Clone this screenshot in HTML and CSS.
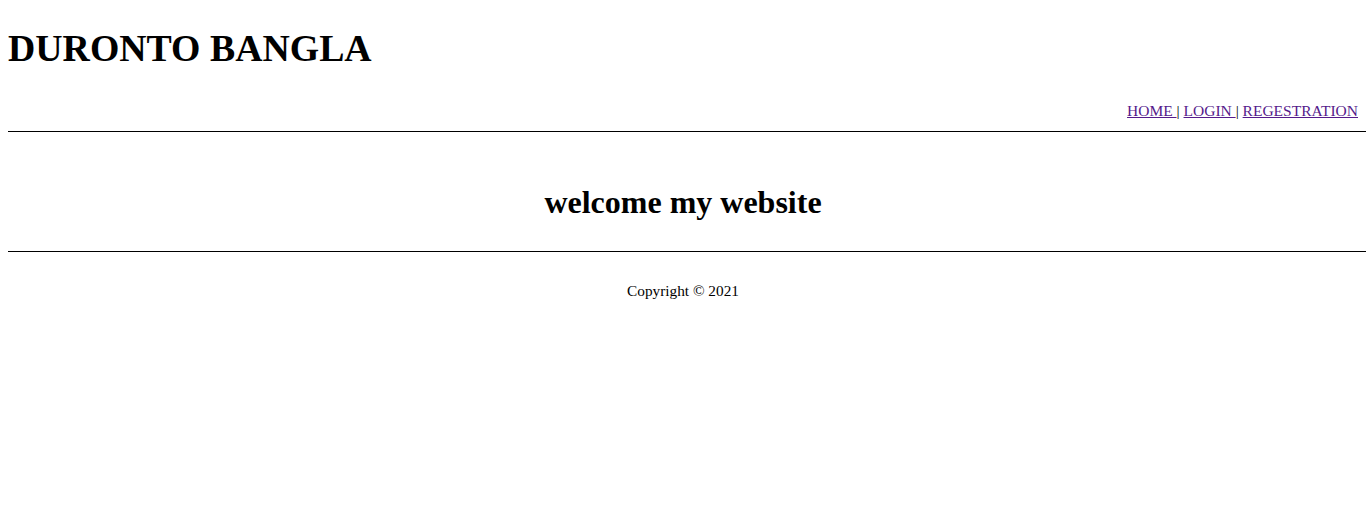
FILE: index.html
```html
<!DOCTYPE html>
<html>
<head>
<meta charset="utf-8">
<title>DURONTO BANGLA</title>
<link rel="stylesheet" href="styles.css">
</head>
<body>
<header class="header">
  <h1 class="brand">DURONTO BANGLA</h1>
  <nav class="nav">
    <a href="#">HOME </a>| <a href="#">LOGIN </a>| <a href="#">REGESTRATION</a>
  </nav>
</header>
<main class="main">
  <h1 class="welcome">welcome my website</h1>
</main>
<footer class="footer">
  <p class="copy">Copyright © 2021</p>
</footer>
</body>
</html>
```

FILE: styles.css
```css
html, body {
  background: #fff;
}
body {
  margin: 8px 0 8px 8px;
  font-family: "Liberation Serif", "Times New Roman", serif;
  color: #000;
}
.header,
.main {
  border-bottom: 1px solid #000;
}
.brand {
  margin: 0;
  padding-top: 18px;
  font-size: 37.8px;
  font-weight: bold;
  line-height: 44px;
}
.nav {
  text-align: right;
  padding: 32px 8px 12px 0;
  font-size: 15.5px;
  line-height: 17px;
}
.nav a {
  color: #551a8b;
}
.main {
  text-align: center;
  padding: 52px 8px 30px 0;
}
.welcome {
  margin: 0;
  font-size: 32px;
  line-height: 37px;
}
.footer {
  text-align: center;
  padding-right: 8px;
}
.copy {
  margin: 30px 0 0;
  font-size: 15.3px;
  line-height: 17px;
}
```
